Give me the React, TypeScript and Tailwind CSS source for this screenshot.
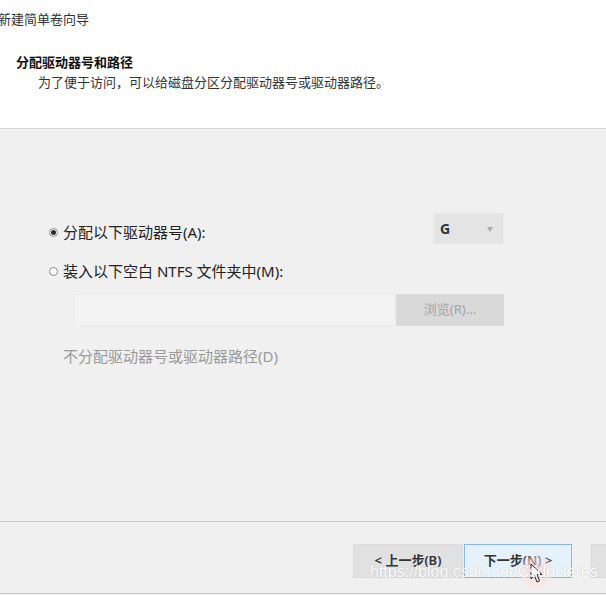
const font = { fontFamily: '"Noto Sans", "Noto Sans CJK SC", sans-serif' }

const Radio = ({ checked }: { checked: boolean }) => (
    <span className="w-[9px] h-[9px] rounded-full border border-[#8a8a8a] bg-white flex items-center justify-center shrink-0">
        {checked && <span className="w-[5px] h-[5px] rounded-full bg-[#2a2a2a]" />}
    </span>
)

export default function App() {
    return (
        <div className="relative w-[606px] h-[595px] overflow-hidden bg-[#f0f0f0] text-[#222]" style={font}>
            {/* header */}
            <div className="h-[129px] bg-white border-b border-[#d2d2d2] flex flex-col">
                <div className="pt-[11px] -ml-[2px] text-[13px] leading-[16px] text-[#333]">新建简单卷向导</div>
                <div className="mt-[27px] pl-[16px] text-[13px] leading-[16px] font-bold text-[#111]">分配驱动器号和路径</div>
                <div className="mt-[4px] pl-[38px] text-[13px] leading-[16px] text-[#333]">
                    为了便于访问，可以给磁盘分区分配驱动器号或驱动器路径。
                </div>
            </div>

            {/* body */}
            <div className="h-[392px] pt-[83px] pl-[49px] flex flex-col border-t border-[#f8f8f8]">
                <div className="w-[455px] h-[31px] flex items-start justify-between">
                    <label className="mt-[9px] flex items-center gap-[5px] text-[15px] leading-[20px]">
                        <Radio checked />
                        分配以下驱动器号(A):
                    </label>
                    <div className="w-[71px] h-[31px] bg-[#e4e4e4] border border-[#e9e9e9] flex items-center justify-between px-[6px]">
                        <span className="text-[14px] font-bold text-[#333]">G</span>
                        <span className="text-[6px] text-[#aaa] mt-[2px] mr-[4px]">▼</span>
                    </div>
                </div>
                <label className="mt-[17px] flex items-center gap-[5px] text-[15px] leading-[20px]">
                    <Radio checked={false} />
                    装入以下空白 NTFS 文件夹中(M):
                </label>
                <div className="mt-[13px] w-[455px] h-[32px] flex items-center">
                    <div className="ml-[25px] w-[321px] h-[32px] bg-[#f3f3f3] border border-[#ececec]" />
                    <div className="w-[108px] h-[32px] ml-auto bg-[#d9d9d9] flex items-center justify-center text-[13px] text-[#a3a3a3]">
                        浏览(R)...
                    </div>
                </div>
                <div className="mt-[20px] pl-[14px] text-[15px] leading-[20px] text-[#9a9a9a]">不分配驱动器号或驱动器路径(D)</div>
            </div>

            {/* footer */}
            <div className="h-[73px] border-t border-[#c8c8c8] border-b flex items-start pt-[22px] pl-[353px] gap-[1px] overflow-hidden">
                <button className="w-[110px] h-[34px] bg-[#e1e1e1] border border-[#dadada] text-[13px] font-semibold text-[#333] shrink-0">
                    &lt; 上一步(B)
                </button>
                <button className="w-[108px] h-[34px] bg-[#e5f1fb] border border-[#8ab8e6] text-[13px] font-semibold text-[#333] shrink-0">
                    下一步(N) &gt;
                </button>
                <button className="ml-[18px] w-[108px] h-[34px] bg-[#e1e1e1] border border-[#dadada] shrink-0" />
            </div>

            {/* pointer highlight + cursor */}
            <div className="absolute left-[516px] top-[552px] w-[40px] h-[40px] rounded-full bg-[radial-gradient(circle,#f7c9c9_0%,#fbe3e3_45%,transparent_70%)] opacity-60" />
            <svg className="absolute left-[530px] top-[563px]" width="14" height="21" viewBox="0 0 14 21">
                <path d="M1 1 L1 16 L4.5 12.5 L7 19 L9.5 18 L7 11.5 L12 11.5 Z" fill="#fff" stroke="#222" strokeWidth="1" />
            </svg>

            {/* watermark */}
            <div
                className="absolute left-[370px] top-[563px] text-[16px] leading-[18px] text-white"
                style={{ fontFamily: '"Liberation Sans", sans-serif', textShadow: "0 0 1px rgba(0,0,0,0.25)" }}
            >
                https://blog.csdn.net/CsdnHeres
            </div>
        </div>
    )
}
